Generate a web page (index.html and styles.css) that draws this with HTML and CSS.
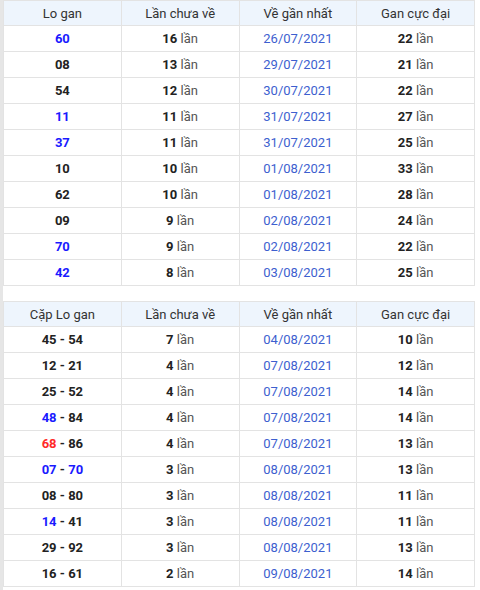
FILE: index.html
```html
<!DOCTYPE html>
<html lang="vi">
<head>
<meta charset="utf-8">
<link rel="stylesheet" href="styles.css">
</head>
<body>
<div class="page">
  <table class="grid">
    <thead>
      <tr><th>Lo gan</th><th>Lần chưa về</th><th>Về gần nhất</th><th>Gan cực đại</th></tr>
    </thead>
    <tbody>
      <tr><td><b class="blue">60</b></td><td><b>16</b> lần</td><td class="date">26/07/2021</td><td><b>22</b> lần</td></tr>
      <tr><td><b>08</b></td><td><b>13</b> lần</td><td class="date">29/07/2021</td><td><b>21</b> lần</td></tr>
      <tr><td><b>54</b></td><td><b>12</b> lần</td><td class="date">30/07/2021</td><td><b>22</b> lần</td></tr>
      <tr><td><b class="blue">11</b></td><td><b>11</b> lần</td><td class="date">31/07/2021</td><td><b>27</b> lần</td></tr>
      <tr><td><b class="blue">37</b></td><td><b>11</b> lần</td><td class="date">31/07/2021</td><td><b>25</b> lần</td></tr>
      <tr><td><b>10</b></td><td><b>10</b> lần</td><td class="date">01/08/2021</td><td><b>33</b> lần</td></tr>
      <tr><td><b>62</b></td><td><b>10</b> lần</td><td class="date">01/08/2021</td><td><b>28</b> lần</td></tr>
      <tr><td><b>09</b></td><td><b>9</b> lần</td><td class="date">02/08/2021</td><td><b>24</b> lần</td></tr>
      <tr><td><b class="blue">70</b></td><td><b>9</b> lần</td><td class="date">02/08/2021</td><td><b>22</b> lần</td></tr>
      <tr><td><b class="blue">42</b></td><td><b>8</b> lần</td><td class="date">03/08/2021</td><td><b>25</b> lần</td></tr>
    </tbody>
  </table>
  <table class="grid">
    <thead>
      <tr><th>Cặp Lo gan</th><th>Lần chưa về</th><th>Về gần nhất</th><th>Gan cực đại</th></tr>
    </thead>
    <tbody>
      <tr><td><b>45 - 54</b></td><td><b>7</b> lần</td><td class="date">04/08/2021</td><td><b>10</b> lần</td></tr>
      <tr><td><b>12 - 21</b></td><td><b>4</b> lần</td><td class="date">07/08/2021</td><td><b>12</b> lần</td></tr>
      <tr><td><b>25 - 52</b></td><td><b>4</b> lần</td><td class="date">07/08/2021</td><td><b>14</b> lần</td></tr>
      <tr><td><b><span class="blue">48</span> - 84</b></td><td><b>4</b> lần</td><td class="date">07/08/2021</td><td><b>14</b> lần</td></tr>
      <tr><td><b><span class="red">68</span> - 86</b></td><td><b>4</b> lần</td><td class="date">07/08/2021</td><td><b>13</b> lần</td></tr>
      <tr><td><b><span class="blue">07</span> - <span class="blue">70</span></b></td><td><b>3</b> lần</td><td class="date">08/08/2021</td><td><b>13</b> lần</td></tr>
      <tr><td><b>08 - 80</b></td><td><b>3</b> lần</td><td class="date">08/08/2021</td><td><b>11</b> lần</td></tr>
      <tr><td><b><span class="blue">14</span> - 41</b></td><td><b>3</b> lần</td><td class="date">08/08/2021</td><td><b>11</b> lần</td></tr>
      <tr><td><b>29 - 92</b></td><td><b>3</b> lần</td><td class="date">08/08/2021</td><td><b>13</b> lần</td></tr>
      <tr><td><b>16 - 61</b></td><td><b>2</b> lần</td><td class="date">09/08/2021</td><td><b>14</b> lần</td></tr>
    </tbody>
  </table>
</div>
</body>
</html>
```
FILE: styles.css
```css
html, body {
  margin: 0;
  padding: 0;
  background: #fff;
}
body {
  font-family: Roboto, "Liberation Sans", sans-serif;
  font-size: 13px;
  color: #555;
}
.page {
  border-left: 3px solid #e6e6e6;
  width: 472px;
  padding-bottom: 4px;
  display: flex;
  flex-direction: column;
  gap: 15px;
}
.grid {
  width: 472px;
  border-collapse: collapse;
  table-layout: fixed;
}
.grid th, .grid td {
  border: 1px solid #e3e3e3;
  text-align: center;
  height: 25px;
  padding: 0;
}
.grid th {
  background: #eef5fd;
  font-weight: 400;
  color: #333;
  height: 24px;
}
.grid td b {
  color: #222;
  font-weight: 700;
}
.grid td b.blue, .grid td .blue {
  color: #1a1aff;
}
.grid td .red {
  color: #ff2a2a;
}
.grid td.date {
  color: #3d5fcf;
}
```
